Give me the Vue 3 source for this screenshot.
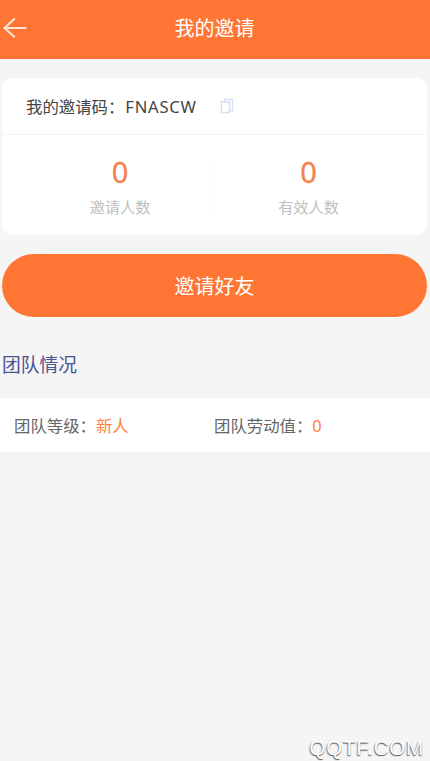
<script setup>
const inviteCode = 'FNASCW'
const stats = [
  { label: '邀请人数', value: 0 },
  { label: '有效人数', value: 0 },
]
const team = [
  { label: '团队等级：', value: '新人' },
  { label: '团队劳动值：', value: '0' },
]
</script>

<template>
  <div class="page">
    <header class="nav">
      <svg class="back" viewBox="0 0 24 22" aria-hidden="true">
        <path d="M11.8 1.5 1.5 11 11.8 20.2M1.5 11H23.5" />
      </svg>
      <h1>我的邀请</h1>
    </header>

    <section class="card">
      <div class="code-row">
        <span>我的邀请码：</span>
        <span class="code">{{ inviteCode }}</span>
        <svg class="copy" viewBox="0 0 14 16" aria-hidden="true">
          <path d="M4.5 3.5V1.5H12.5V12.5H10M1.5 4H9.5V14.5H1.5Z" />
        </svg>
      </div>
      <div class="stats">
        <div v-for="s in stats" :key="s.label" class="stat">
          <strong>{{ s.value }}</strong>
          <span>{{ s.label }}</span>
        </div>
      </div>
    </section>

    <button class="invite">邀请好友</button>

    <h2>团队情况</h2>
    <section class="team">
      <div v-for="t in team" :key="t.label" class="team-item">
        <span>{{ t.label }}</span><span class="accent">{{ t.value }}</span>
      </div>
    </section>

    <footer class="mark">QQTF.COM</footer>
  </div>
</template>

<style>
body {
  background: #f5f5f5;
}
</style>

<style scoped>
.page {
  display: flex;
  flex-direction: column;
  height: 761px;
  overflow: hidden;
  background: #f5f5f5;
  font-family: "Noto Sans", "Noto Sans CJK SC", sans-serif;
  white-space: nowrap;
}
.nav {
  display: grid;
  grid-template-columns: 30px 1fr 31px;
  align-items: center;
  height: 59px;
  flex: none;
  background: #ff7634;
  color: #fff;
}
.back {
  width: 24px;
  height: 22px;
  margin: -3px 0 0 3px;
  fill: none;
  stroke: #ffe4d5;
  stroke-width: 2.1;
}
h1 {
  margin: -1px 0 0;
  font-size: 20px;
  font-weight: 400;
  line-height: 30px;
  text-align: center;
}
.card {
  flex: none;
  height: 157px;
  margin: 19px 3px 0 2px;
  border-radius: 10px;
  background: #fff;
}
.code-row {
  display: flex;
  align-items: center;
  height: 56px;
  padding-left: 24px;
  border-bottom: 1px solid #f3f3f3;
  font-size: 16.4px;
  color: #444;
}
.code {
  margin-left: 1px;
  font-size: 16.6px;
  letter-spacing: 0.75px;
}
.copy {
  width: 14px;
  height: 16px;
  margin-left: 23px;
  fill: none;
  stroke: #d5dff6;
  stroke-width: 1.4;
}
.stats {
  display: grid;
  grid-template-columns: 1fr 1fr;
  padding: 24px 25px 0 24px;
}
.stat {
  display: flex;
  flex-direction: column;
  align-items: center;
  height: 52px;
}
.stat + .stat {
  border-left: 1px solid #fafafa;
}
.stat strong {
  margin-top: -1px;
  font-size: 29px;
  font-weight: 400;
  line-height: 28px;
  color: #f4814e;
  -webkit-text-stroke: 0.3px #f4814e;
}
.stat span {
  margin-top: 10px;
  font-size: 15.2px;
  line-height: 22px;
  color: #bebebe;
}
.invite {
  flex: none;
  height: 63px;
  margin: 19px 3px 0 2px;
  padding: 0;
  border: 0;
  border-radius: 32px;
  background: #ff7634;
  color: #fff;
  font: inherit;
  font-size: 20px;
}
h2 {
  margin: 33px 0 0 2px;
  font-size: 18.8px;
  font-weight: 400;
  line-height: 30px;
  color: #4a5391;
}
.team {
  display: grid;
  grid-template-columns: 200px 1fr;
  align-items: center;
  flex: none;
  height: 54px;
  margin-top: 18px;
  padding-left: 14px;
  background: #fff;
  font-size: 16.4px;
  color: #666;
}
.accent {
  color: #ff7f45;
}
.mark {
  margin: auto 6px 2px auto;
  font-family: "Liberation Sans", sans-serif;
  font-size: 20.5px;
  letter-spacing: 0.8px;
  line-height: 22px;
  color: #fff;
  text-shadow: 0 1px 1px #666, -1px 1px 1px #999;
}
</style>
